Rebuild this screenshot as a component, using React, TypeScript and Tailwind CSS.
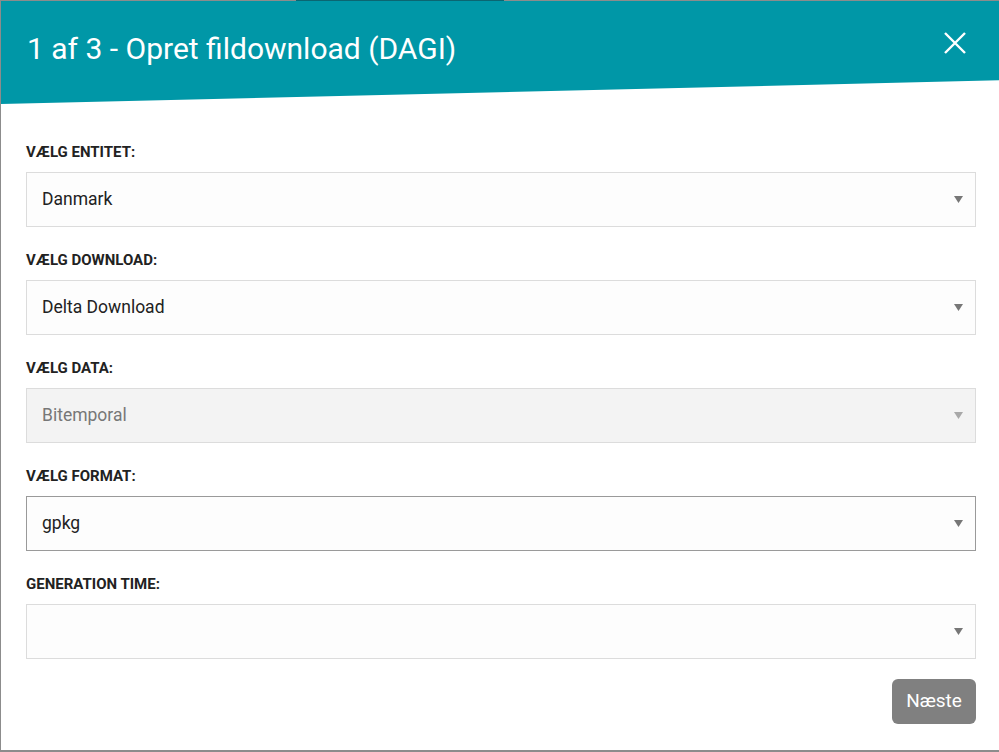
import React from 'react'

type Field = {
  label: string
  value: string
  disabled?: boolean
  focused?: boolean
}

const fields: Field[] = [
  { label: 'Vælg entitet:', value: 'Danmark' },
  { label: 'Vælg download:', value: 'Delta Download' },
  { label: 'Vælg data:', value: 'Bitemporal', disabled: true },
  { label: 'Vælg format:', value: 'gpkg', focused: true },
  { label: 'Generation time:', value: '' },
]

function Caret({ muted }: { muted?: boolean }) {
  return (
    <svg width="9" height="7" viewBox="0 0 9 7" className="shrink-0">
      <path d="M0 0h9L4.5 7z" fill={muted ? '#a8a8a8' : '#777777'} />
    </svg>
  )
}

function SelectBox({ field }: { field: Field }) {
  const border = field.focused ? 'border-[#9a9a9a]' : 'border-[#dcdcdc]'
  const bg = field.disabled ? 'bg-[#f3f3f3]' : 'bg-[#fdfdfd]'
  const text = field.disabled ? 'text-[#777777]' : 'text-[#222222]'
  return (
    <div className={`flex h-[55px] items-center justify-between border pl-[15px] pr-[12px] ${border} ${bg}`}>
      <span className={`text-[17.5px] ${text}`}>{field.value}</span>
      <Caret muted={field.disabled} />
    </div>
  )
}

export default function App() {
  return (
    <div className="h-[752px] w-[999px] overflow-hidden bg-[#8c8c8c] font-['Roboto',sans-serif]">
      {/* overlay strip at top, with bit of page showing through */}
      <div className="flex h-px">
        <div className="w-[296px]" />
        <div className="w-[208px] bg-[#0b6672]" />
      </div>

      <div className="ml-px h-[749px] w-[998px] bg-white">
        <div className="relative h-[103px] bg-[#0097a7] [clip-path:polygon(0_0,100%_0,100%_77%,0_100%)]">
          <h1 className="pl-[26px] pt-[30px] text-[30px] leading-[36px] text-white">
            1 af 3 - Opret fildownload (DAGI)
          </h1>
          <button className="absolute left-[941px] top-[29px] p-0.5">
            <svg width="22" height="22" viewBox="0 0 22 22">
              <path d="M1 1l20 20M21 1L1 21" stroke="white" strokeWidth="2.4" />
            </svg>
          </button>
        </div>

        <div className="pl-[25px] pr-[23px] pt-10">
          <div className="flex flex-col gap-[25px]">
            {fields.map((f) => (
              <div key={f.label}>
                <label className="mb-3 block text-[15px] leading-4 font-bold uppercase text-[#222222]">
                  {f.label}
                </label>
                <SelectBox field={f} />
              </div>
            ))}
          </div>
          <div className="mt-5 flex justify-end">
            <button className="h-[45px] w-[84px] rounded-md bg-[#808080] text-[19px] text-white">
              Næste
            </button>
          </div>
        </div>
      </div>
    </div>
  )
}
